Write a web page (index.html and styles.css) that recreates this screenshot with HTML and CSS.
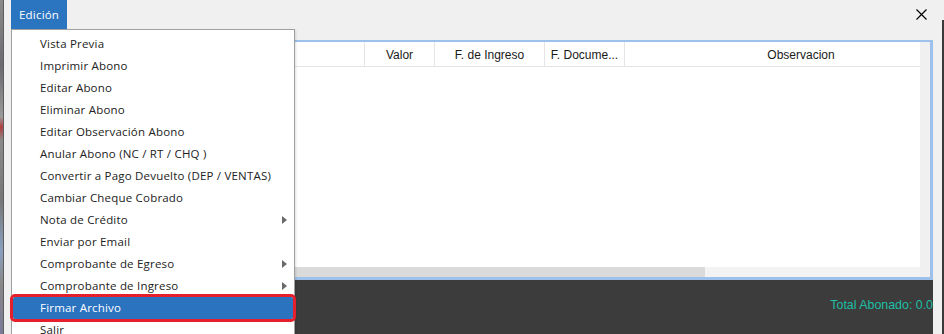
FILE: index.html
```html
<!DOCTYPE html>
<html lang="es">
<head>
<meta charset="utf-8">
<title>Abonos</title>
<link rel="stylesheet" href="styles.css">
</head>
<body>
<div class="screen">
  <div class="desk-left"></div>
  <div class="window">
    <div class="menubar">
      <div class="menu-btn">Edición</div>
      <div class="spacer"></div>
      <div class="close">
        <svg width="11" height="11" viewBox="0 0 11 11"><path d="M0.5 0.5 L10.5 10.5 M10.5 0.5 L0.5 10.5" stroke="#000" stroke-width="1.2" fill="none"/></svg>
      </div>
    </div>
    <div class="content">
      <div class="grid-panel">
        <div class="table-area">
          <div class="header">
            <div class="col c0"></div>
            <div class="col c1">Valor</div>
            <div class="col c2">F. de Ingreso</div>
            <div class="col c3">F. Docume...</div>
            <div class="col c4">Observacion</div>
          </div>
          <div class="rows"></div>
          <div class="hscroll"><div class="thumb"></div></div>
        </div>
        <div class="vscroll"></div>
      </div>
      <div class="footer"><span class="total">Total Abonado: 0.0</span></div>
    </div>
    <div class="dropdown">
      <div class="item">Vista Previa</div>
      <div class="item">Imprimir Abono</div>
      <div class="item">Editar Abono</div>
      <div class="item">Eliminar Abono</div>
      <div class="item">Editar Observación Abono</div>
      <div class="item">Anular Abono (NC / RT / CHQ )</div>
      <div class="item">Convertir a Pago Devuelto (DEP / VENTAS)</div>
      <div class="item">Cambiar Cheque Cobrado</div>
      <div class="item sub">Nota de Crédito<span class="arrow"></span></div>
      <div class="item">Enviar por Email</div>
      <div class="item sub">Comprobante de Egreso<span class="arrow"></span></div>
      <div class="item sub">Comprobante de Ingreso<span class="arrow"></span></div>
      <div class="item active">Firmar Archivo</div>
      <div class="item">Salir</div>
    </div>
  </div>
  <div class="desk-right"></div>
</div>
</body>
</html>
```

FILE: styles.css
```css
html, body {
  margin: 0;
  padding: 0;
}
body {
  width: 944px;
  height: 334px;
  overflow: hidden;
  background: #f0f0f0;
}
.screen {
  display: flex;
  width: 944px;
  height: 334px;
}
.desk-left {
  width: 3px;
  flex-shrink: 0;
  border-right: 1px solid #5e5e5e;
  background: linear-gradient(#8a8a8a, #6d6a70 20%, #9a9a9a 35%, #b04040 38%, #8a8a8a 42%, #777 60%, #8aa0c0 75%, #888 85%, #7a7a9a);
}
.desk-right {
  width: 2px;
  flex-shrink: 0;
  margin-top: 20px;
  background: #3a3a3a;
}
.window {
  flex: 1;
  min-width: 0;
  position: relative;
  background: #f0f0f0;
  display: flex;
  flex-direction: column;
}
.menubar {
  height: 29px;
  display: flex;
  align-items: stretch;
}
.menu-btn {
  margin-left: 7px;
  width: 48px;
  padding-left: 8px;
  background: #2b74c0;
  color: #fff;
  font: 11.5px/29px "Open Sans", sans-serif;
  letter-spacing: 0.2px;
}
.spacer { flex: 1; }
.close {
  margin-right: 15px;
  padding-top: 9px;
  width: 11px;
}
.close svg { display: block; }
.content {
  margin: 11px 9px 0 8px;
  flex: 1;
  min-width: 0;
  display: flex;
  flex-direction: column;
}
.grid-panel {
  height: 235px;
  border-style: solid;
  border-color: #9dc1ea;
  border-width: 2px 3px 3px 2px;
  background: #fff;
  display: flex;
}
.table-area {
  flex: 1;
  min-width: 0;
  display: flex;
  flex-direction: column;
  overflow: hidden;
}
.header {
  height: 24px;
  border-bottom: 1px solid #e5e5e5;
  display: flex;
  font: 12px "Liberation Sans", Arial, sans-serif;
  color: #1a1a1a;
}
.col {
  box-sizing: border-box;
  border-right: 1px solid #e5e5e5;
  text-align: center;
  padding-top: 6px;
  white-space: nowrap;
  flex-shrink: 0;
}
.c0 { width: 351px; }
.c1 { width: 70px; }
.c2 { width: 110px; }
.c3 { width: 80px; }
.c4 { width: 352px; border-right: none; }
.rows { flex: 1; }
.hscroll {
  height: 10px;
  background: #f3f3f3;
  display: flex;
}
.thumb {
  width: 691px;
  background: #dadada;
}
.vscroll {
  width: 10px;
  flex-shrink: 0;
  background: #f0f0f0;
}
.footer {
  flex: 1;
  background: #3c3c3c;
  text-align: right;
  padding-top: 15px;
  overflow: hidden;
}
.total {
  font: 12.4px/16px "Liberation Sans", Arial, sans-serif;
  color: #1dbfa5;
  white-space: nowrap;
}
.dropdown {
  position: absolute;
  left: 7px;
  top: 29px;
  width: 282px;
  background: #fff;
  border: 1px solid #a0a0a0;
  padding: 3px 0;
  z-index: 5;
  box-shadow: 1px 1px 2px rgba(0,0,0,0.12);
}
.item {
  height: 22px;
  display: flex;
  align-items: center;
  padding-left: 28px;
  padding-right: 7px;
  padding-bottom: 1px;
  box-sizing: border-box;
  font: 11.5px "Open Sans", sans-serif;
  letter-spacing: 0.2px;
  color: #222;
  white-space: nowrap;
}
.item.sub {
  justify-content: space-between;
}
.arrow {
  width: 0;
  height: 0;
  border-top: 4.5px solid transparent;
  border-bottom: 4.5px solid transparent;
  border-left: 5px solid #6a6a6a;
}
.item.active {
  margin: 0 1px;
  padding-left: 27px;
  background: #2b72bf;
  color: #fff;
  outline: 3px solid #e5202a;
  border-radius: 2px;
}
```
